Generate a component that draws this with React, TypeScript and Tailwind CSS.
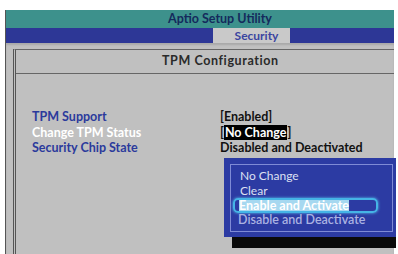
import React from "react";

const font = { fontFamily: "Lato, 'Noto Sans', sans-serif" };

const rows = [
  { label: "TPM Support", value: "[Enabled]", active: false },
  { label: "Change TPM Status", value: null, active: true },
  { label: "Security Chip State", value: "Disabled and Deactivated", active: false },
];

const options = ["No Change", "Clear", "Enable and Activate", "Disable and Deactivate"];

const App: React.FC = () => {
  return (
    <div className="w-[398px] h-[254px] bg-white overflow-hidden" style={font}>
      <div className="relative ml-[5px] mt-[10px] w-[389px] h-[244px] bg-[#c0c0c0] border-l border-[#555]">
        {/* Title bar */}
        <div className="h-[18px] bg-[#3d918c] flex items-center pl-[162px] text-[12.5px] font-bold text-[#142a5c]">
          Aptio Setup Utility
        </div>

        {/* Menu bar */}
        <div className="h-[15px] bg-[#2d3796] flex">
          <div className="ml-[207px] w-[77px] bg-[#c9c9c9] flex items-center justify-center pl-[10px] text-[12px] font-bold text-[#3b45a0]">
            Security
          </div>
        </div>

        {/* Main panel */}
        <div className="pl-[7px] pt-[6px] h-[211px] shadow-[inset_0_2px_2px_rgba(0,0,0,0.12)]">
          <div className="h-full border-l-[3px] border-double border-[#555] border-t border-t-[#666]">
            <div className="h-[24px] border-b border-[#666] flex items-center pl-[146px] text-[12.5px] font-bold tracking-[0.6px] text-[#2a2a2a]">
              TPM Configuration
            </div>

            <div className="pt-[35px] pl-[16px] flex flex-col text-[12.5px] font-bold">
              {rows.map((r) => (
                <div key={r.label} className="h-[15.5px] flex items-center leading-[15px]">
                  <span className={`w-[188px] ${r.active ? "text-white" : "text-[#2b3a9c]"}`}>{r.label}</span>
                  {r.value ? (
                    <span className="text-[#111]">{r.value}</span>
                  ) : (
                    <span className="text-[#111]">
                      [<span className="bg-black text-white px-[1px]">No Change</span>]
                    </span>
                  )}
                </div>
              ))}
            </div>
          </div>
        </div>

        {/* Option popup */}
        <div className="absolute left-[218px] top-[148px] w-[172px] h-[79px] bg-[#2c3ba3] pl-[6px] pt-[6px] pr-[3px] pb-[5px]">
          <div className="h-full border border-[#7f8bd6] flex flex-col pt-[3px] pl-[2px] pr-[14px] text-[12.5px] leading-[12px]">
            <div className="h-[15px] flex items-center pl-[7px] text-[12px] text-[#dde0f2]">{options[0]}</div>
            <div className="h-[15px] flex items-center pl-[7px] text-[12px] text-[#dde0f2]">{options[1]}</div>
            <div className="h-[15px] flex items-center pl-[4px] rounded-[5px] border-2 border-[#45b4e6] shadow-[0_0_3px_#5cc8f0]">
              <span className="bg-[#a6d8f0] text-white font-bold leading-[11px]">{options[2]}</span>
            </div>
            <div className="h-[13px] flex items-center pl-[5px] text-[#aab2e2] font-semibold">{options[3]}</div>
          </div>
        </div>
        <div className="absolute left-[226px] top-[227px] w-[164px] h-[11px] bg-[#0a0a0a]" />
      </div>
    </div>
  );
};

export default App;
